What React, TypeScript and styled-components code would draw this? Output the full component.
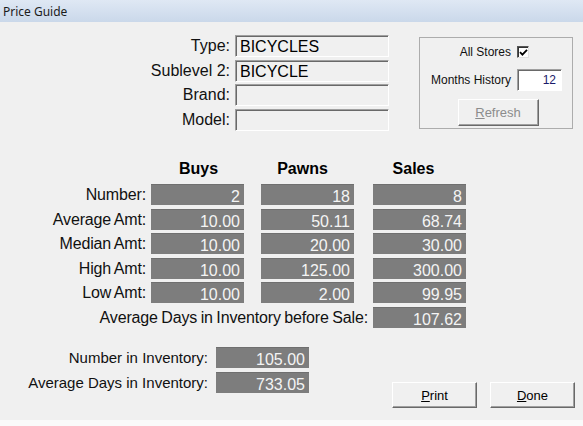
import React from "react";
import styled, { createGlobalStyle } from "styled-components";

const Global = createGlobalStyle`
  html, body {
    margin: 0;
    padding: 0;
    background: #f0f0f0;
  }
  body {
    font-family: "Liberation Sans", Arial, sans-serif;
  }
`;

const Window = styled.div`
  width: 583px;
  height: 426px;
  display: flex;
  flex-direction: column;
  background: #f0f0f0;
  overflow: hidden;
`;

const TitleBar = styled.div`
  height: 22px;
  flex: none;
  display: flex;
  align-items: center;
  padding-left: 3px;
  background: linear-gradient(#dfe8f4, #cad8ea);
  font-family: "Noto Sans", "Open Sans", sans-serif;
  font-size: 12px;
  color: #1b1b1b;
`;

const Body = styled.div`
  flex: 1;
  display: flex;
  flex-direction: column;
`;

const BottomEdge = styled.div`
  height: 6px;
  flex: none;
  background: #fafafa;
`;

const TopRow = styled.div`
  display: flex;
  align-items: flex-start;
  margin-top: 13px;
`;

const FieldGrid = styled.div`
  display: grid;
  grid-template-columns: 230px 154px;
  grid-auto-rows: 22px;
  column-gap: 5px;
  row-gap: 2.5px;
`;

const FieldLabel = styled.div`
  font-size: 16px;
  line-height: 22px;
  text-align: right;
  color: #111;
`;

const FieldBox = styled.div`
  box-sizing: border-box;
  height: 22px;
  border: 1px solid;
  border-color: #a0a0a0 #ffffff #ffffff #a0a0a0;
  box-shadow: inset 1px 1px #696969;
  padding-left: 4px;
  font-size: 16px;
  line-height: 22px;
  color: #000;
  white-space: nowrap;
  overflow: hidden;
`;

const GroupBox = styled.div`
  box-sizing: border-box;
  width: 154px;
  height: 92px;
  margin-left: 30px;
  margin-top: 2px;
  border: 1px solid #acacac;
  padding-top: 6px;
  display: grid;
  grid-template-columns: 91px 45px;
  grid-template-rows: 16px 22px 27px;
  column-gap: 6px;
  row-gap: 8.5px;
  align-items: center;
`;

const SmallLabel = styled.div`
  font-size: 12px;
  text-align: right;
  color: #111;
  white-space: nowrap;
`;

const CheckBox = styled.div`
  box-sizing: border-box;
  width: 12px;
  height: 12px;
  background: #fff;
  border: 1px solid;
  border-color: #555 #e0e0e0 #e0e0e0 #555;
  box-shadow: inset 1px 1px #333;
  display: flex;
  align-items: center;
  justify-content: center;
`;

const SmallInput = styled.div`
  box-sizing: border-box;
  height: 22px;
  background: #fff;
  border: 1px solid;
  border-color: #a0a0a0 #ffffff #ffffff #a0a0a0;
  box-shadow: inset 1px 1px #696969;
  text-align: right;
  padding-right: 5px;
  font-size: 12px;
  line-height: 20px;
  color: #1a1a6a;
`;

const WinButton = styled.div<{ $disabled?: boolean; $width: number; $height: number }>`
  box-sizing: border-box;
  width: ${(p) => p.$width}px;
  height: ${(p) => p.$height}px;
  background: #f0f0f0;
  border: 1px solid;
  border-color: #ffffff #696969 #696969 #ffffff;
  box-shadow: inset -1px -1px #a0a0a0;
  display: flex;
  align-items: center;
  justify-content: center;
  font-size: 13px;
  color: ${(p) => (p.$disabled ? "#8c8c8c" : "#000")};
  u {
    text-decoration: underline;
    text-underline-offset: 1px;
  }
`;

const RefreshCell = styled.div`
  grid-column: 1 / 3;
  display: flex;
  justify-content: center;
  padding-left: 14px;
`;

const StatsGrid = styled.div`
  display: grid;
  grid-template-columns: 151px 110px 112px 93px;
  grid-template-rows: 25px;
  grid-auto-rows: 21px;
  row-gap: 3.5px;
  margin-top: 25px;
`;

const ColHead = styled.div<{ $shift: number }>`
  width: 93px;
  margin-left: ${(p) => p.$shift}px;
  text-align: center;
  font-weight: bold;
  font-size: 16px;
  line-height: 25px;
  color: #000;
`;

const StatLabel = styled.div<{ $span?: string }>`
  grid-column: ${(p) => p.$span || "auto"};
  text-align: right;
  padding-right: 5px;
  font-size: 16px;
  line-height: 21px;
  letter-spacing: -0.15px;
  word-spacing: -0.8px;
  color: #111;
  white-space: nowrap;
`;

const ValueBox = styled.div`
  box-sizing: border-box;
  width: 93px;
  height: 21px;
  background: #7d7d7d;
  border-top: 1px solid #6f6f6f;
  text-align: right;
  padding-right: 4px;
  font-size: 16px;
  line-height: 23px;
  color: #f4f4f4;
  overflow: hidden;
`;

const BottomRow = styled.div`
  display: flex;
  align-items: flex-start;
  margin-top: 19.5px;
  padding-right: 8px;
`;

const InvGrid = styled.div`
  display: grid;
  grid-template-columns: 216px 93px;
  grid-auto-rows: 21px;
  row-gap: 4px;
`;

const InvLabel = styled.div`
  text-align: right;
  padding-right: 8px;
  font-size: 15px;
  line-height: 21px;
  color: #111;
  white-space: nowrap;
`;

const ButtonRow = styled.div`
  margin-left: auto;
  margin-top: 35px;
  display: flex;
  gap: 13px;
`;

const Check = () => (
  <svg width="9" height="9" viewBox="0 0 9 9">
    <path d="M1 4.2 L3.4 6.6 L8 1.8" fill="none" stroke="#000" strokeWidth="1.8" />
  </svg>
);

const fields = [
  ["Type:", "BICYCLES"],
  ["Sublevel 2:", "BICYCLE"],
  ["Brand:", ""],
  ["Model:", ""],
];

const stats = [
  ["Number:", "2", "18", "8"],
  ["Average Amt:", "10.00", "50.11", "68.74"],
  ["Median Amt:", "10.00", "20.00", "30.00"],
  ["High Amt:", "10.00", "125.00", "300.00"],
  ["Low Amt:", "10.00", "2.00", "99.95"],
];

const App: React.FC = () => {
  return (
    <Window>
      <Global />
      <TitleBar>Price Guide</TitleBar>
      <Body>
        <TopRow>
          <FieldGrid>
            {fields.map(([label, value]) => (
              <React.Fragment key={label}>
                <FieldLabel>{label}</FieldLabel>
                <FieldBox>{value}</FieldBox>
              </React.Fragment>
            ))}
          </FieldGrid>
          <GroupBox>
            <SmallLabel>All Stores</SmallLabel>
            <CheckBox>
              <Check />
            </CheckBox>
            <SmallLabel>Months History</SmallLabel>
            <SmallInput>12</SmallInput>
            <RefreshCell>
              <WinButton $disabled $width={81} $height={27}>
                <span>
                  <u>R</u>efresh
                </span>
              </WinButton>
            </RefreshCell>
          </GroupBox>
        </TopRow>

        <StatsGrid>
          <div />
          <ColHead $shift={1}>Buys</ColHead>
          <ColHead $shift={-5}>Pawns</ColHead>
          <ColHead $shift={-6}>Sales</ColHead>
          {stats.map(([label, b, p, s]) => (
            <React.Fragment key={label}>
              <StatLabel>{label}</StatLabel>
              <ValueBox>{b}</ValueBox>
              <ValueBox>{p}</ValueBox>
              <ValueBox>{s}</ValueBox>
            </React.Fragment>
          ))}
          <StatLabel $span="1 / 4">Average Days in Inventory before Sale:</StatLabel>
          <ValueBox>107.62</ValueBox>
        </StatsGrid>

        <BottomRow>
          <InvGrid>
            <InvLabel>Number in Inventory:</InvLabel>
            <ValueBox>105.00</ValueBox>
            <InvLabel>Average Days in Inventory:</InvLabel>
            <ValueBox>733.05</ValueBox>
          </InvGrid>
          <ButtonRow>
            <WinButton $width={85} $height={26}>
              <span>
                <u>P</u>rint
              </span>
            </WinButton>
            <WinButton $width={85} $height={26}>
              <span>
                <u>D</u>one
              </span>
            </WinButton>
          </ButtonRow>
        </BottomRow>
      </Body>
      <BottomEdge />
    </Window>
  );
};

export default App;
